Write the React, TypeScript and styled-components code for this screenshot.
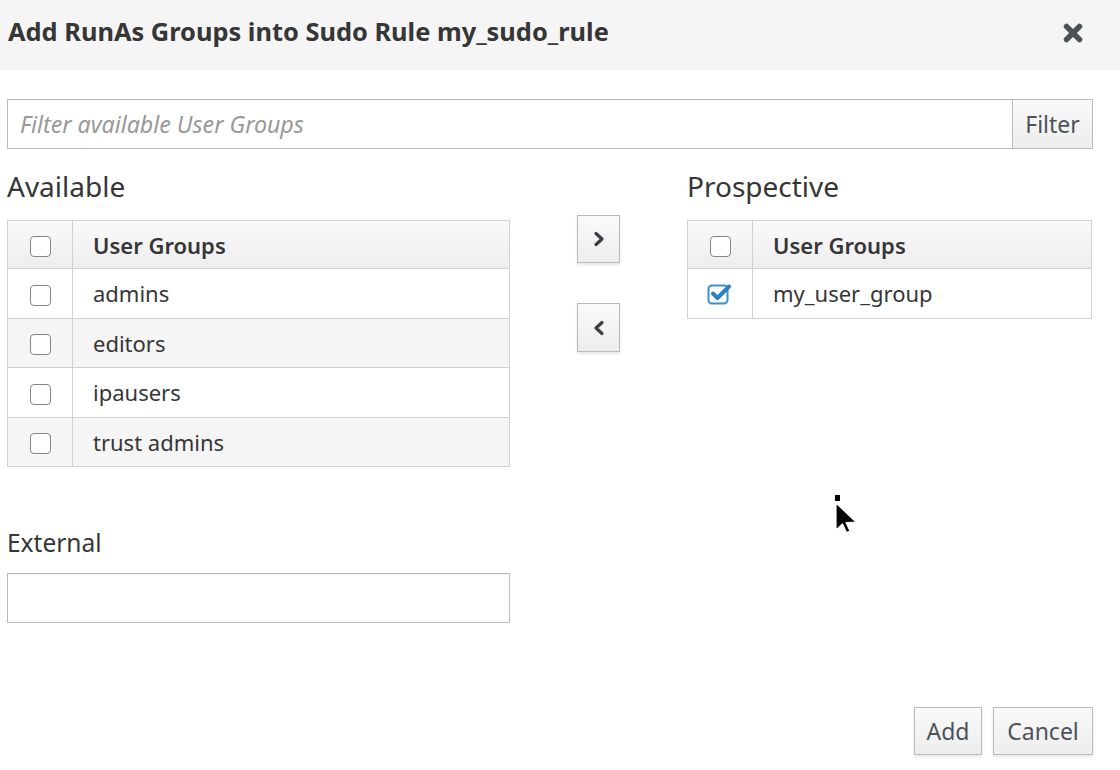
import React from "react";
import styled, { createGlobalStyle } from "styled-components";

const Global = createGlobalStyle`
  html, body { margin: 0; padding: 0; background: #fff; }
  body { font-family: "Noto Sans", "Open Sans", sans-serif; color: #363636; }
  * { box-sizing: border-box; }
`;

const Page = styled.div`
  position: relative;
  width: 1120px;
  height: 770px;
  overflow: hidden;
  background: #fff;
`;

const Header = styled.div`
  height: 70px;
  background: #f5f5f5;
  display: flex;
  align-items: center;
  justify-content: space-between;
  padding: 0 37px 9px 8px;
`;

const Title = styled.h1`
  margin: 0;
  font-size: 25.4px;
  line-height: 30px;
  font-weight: 700;
  color: #363636;
`;

const Close = styled.span`
  display: flex;
  margin-top: 5px;
`;

const Body = styled.div`
  padding: 29px 27px 0 7px;
`;

const FilterRow = styled.div`
  display: flex;
  height: 50px;
`;

const TextInput = styled.div<{ $width?: string }>`
  flex: ${(p) => (p.$width ? "none" : "1")};
  width: ${(p) => p.$width ?? "auto"};
  height: 50px;
  border: 1px solid #bbb;
  display: flex;
  align-items: center;
  padding: 0 12px;
  font-size: 23.2px;
  font-style: italic;
  color: #999;
  background: #fff;
  box-shadow: inset 0 1px 1px rgba(3, 3, 3, 0.04);
`;

const Btn = styled.button<{ $w: number; $h?: number }>`
  width: ${(p) => p.$w}px;
  height: ${(p) => p.$h ?? 50}px;
  border: 1px solid #bbb;
  background: linear-gradient(#fafafa, #ededed);
  font-family: inherit;
  font-size: 23px;
  color: #4d5258;
  padding: 0;
  display: flex;
  align-items: center;
  justify-content: center;
  box-shadow: 0 2px 3px rgba(3, 3, 3, 0.1);
`;

const FilterBtn = styled(Btn)`
  border-left: none;
  box-shadow: none;
`;

const Columns = styled.div`
  display: grid;
  grid-template-columns: 503px 177px 405px;
  margin-top: 20px;
`;

const Col = styled.div`
  display: flex;
  flex-direction: column;
`;

const Label = styled.div<{ $small?: boolean }>`
  font-size: ${(p) => (p.$small ? "24.5px" : "28px")};
  line-height: ${(p) => (p.$small ? "30px" : "34px")};
  color: #363636;
  margin-bottom: ${(p) => (p.$small ? "15px" : "17px")};
`;

const Table = styled.table`
  border-collapse: collapse;
  width: 100%;
  font-size: 22px;
`;

const HeadRow = styled.tr`
  height: 48px;
  background: linear-gradient(#fafafa, #ededed);
`;

const Row = styled.tr<{ $alt: boolean }>`
  height: 49.5px;
  background: ${(p) => (p.$alt ? "#f5f5f5" : "#fff")};
`;

const Cell = styled.td<{ $check?: boolean; $head?: boolean }>`
  border: 1px solid #d1d1d1;
  width: ${(p) => (p.$check ? "65px" : "auto")};
  text-align: ${(p) => (p.$check ? "center" : "left")};
  padding: ${(p) => (p.$check ? "0" : "0 0 0 20px")};
  font-weight: ${(p) => (p.$head ? 600 : 400)};
  color: #363636;
  vertical-align: middle;
  line-height: 1;
`;

const Box = styled.span`
  display: inline-block;
  width: 21px;
  height: 21px;
  border: 1.5px solid #858585;
  border-radius: 4px;
  vertical-align: middle;
  background: #fff;
`;

const Mover = styled.div`
  padding: 46px 0 0 67px;
  display: flex;
  flex-direction: column;
  gap: 40px;
`;

const ExternalBlock = styled.div`
  margin-top: 61px;
  width: 503px;
`;

const Footer = styled.div`
  display: flex;
  justify-content: flex-end;
  gap: 11px;
  padding: 0 27px 0 0;
  margin-top: 84px;
`;

const Cursor = styled.svg`
  position: absolute;
  left: 833px;
  top: 493px;
`;

const CheckBox = ({ checked }: { checked?: boolean }) =>
  checked ? (
    <svg width="26" height="24" viewBox="0 0 26 24" style={{ verticalAlign: "middle" }}>
      <rect x="1.5" y="3.5" width="19" height="18" rx="3.5" fill="none" stroke="#3d8fcf" strokeWidth="2" />
      <path d="M6 11.5 L10.5 16 L22 4.5" fill="none" stroke="#2f80c2" strokeWidth="4" strokeLinecap="round" strokeLinejoin="round" />
    </svg>
  ) : (
    <Box />
  );

const Chevron = ({ dir }: { dir: "left" | "right" }) => (
  <svg width="14" height="16" viewBox="0 0 14 16">
    <path
      d={dir === "right" ? "M4 2.5 L10 8 L4 13.5" : "M10 2.5 L4 8 L10 13.5"}
      fill="none"
      stroke="#393f44"
      strokeWidth="3.2"
      strokeLinecap="round"
      strokeLinejoin="round"
    />
  </svg>
);

const available = ["admins", "editors", "ipausers", "trust admins"];

export default function App() {
  return (
    <Page>
      <Global />
      <Header>
        <Title>Add RunAs Groups into Sudo Rule my_sudo_rule</Title>
        <Close>
          <svg width="20" height="20" viewBox="0 0 20 20">
            <path d="M3.5 3.5 L16.5 16.5 M16.5 3.5 L3.5 16.5" stroke="#4d5258" strokeWidth="5.5" strokeLinecap="round" />
          </svg>
        </Close>
      </Header>
      <Body>
        <FilterRow>
          <TextInput>Filter available User Groups</TextInput>
          <FilterBtn $w={80}>Filter</FilterBtn>
        </FilterRow>
        <Columns>
          <Col>
            <Label>Available</Label>
            <Table>
              <tbody>
                <HeadRow>
                  <Cell $check $head>
                    <CheckBox />
                  </Cell>
                  <Cell $head>User Groups</Cell>
                </HeadRow>
                {available.map((g, i) => (
                  <Row key={g} $alt={i % 2 === 1}>
                    <Cell $check>
                      <CheckBox />
                    </Cell>
                    <Cell>{g}</Cell>
                  </Row>
                ))}
              </tbody>
            </Table>
          </Col>
          <Mover>
            <Btn $w={43} $h={48}>
              <Chevron dir="right" />
            </Btn>
            <Btn $w={43} $h={49}>
              <Chevron dir="left" />
            </Btn>
          </Mover>
          <Col>
            <Label>Prospective</Label>
            <Table>
              <tbody>
                <HeadRow>
                  <Cell $check $head>
                    <CheckBox />
                  </Cell>
                  <Cell $head>User Groups</Cell>
                </HeadRow>
                <Row $alt={false}>
                  <Cell $check>
                    <CheckBox checked />
                  </Cell>
                  <Cell>my_user_group</Cell>
                </Row>
              </tbody>
            </Table>
          </Col>
        </Columns>
        <ExternalBlock>
          <Label $small>External</Label>
          <TextInput $width="503px" />
        </ExternalBlock>
      </Body>
      <Footer>
        <Btn $w={68} $h={48}>Add</Btn>
        <Btn $w={100} $h={48}>Cancel</Btn>
      </Footer>
      <Cursor width="30" height="42" viewBox="0 0 30 42">
        <rect x="2" y="2" width="5" height="6" fill="#000" />
        <path d="M3 10 L3 37 L9.5 31 L13.5 39.5 L17 38 L13 29.5 L23 29 Z" fill="#000" stroke="#fff" strokeWidth="1.2" strokeLinejoin="round" />
      </Cursor>
    </Page>
  );
}
